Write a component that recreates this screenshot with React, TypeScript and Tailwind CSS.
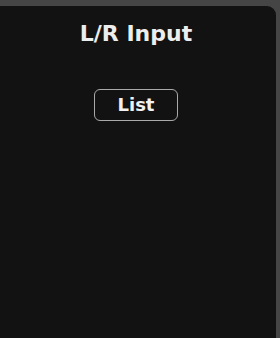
export default function App() {
  return (
    <div className="w-[280px] h-[338px] bg-[#454545] pt-[6px] pr-[4px] overflow-hidden" style={{ fontFamily: '"DejaVu Sans", "Liberation Sans", sans-serif' }}>
      <div className="h-full bg-[#121212] rounded-tr-[9px] flex flex-col items-center pr-[4px]">
        <h1 className="mt-[14px] text-[22px] leading-[28px] font-bold text-[#ededed]">L/R Input</h1>
        <button className="mt-[41px] w-[84px] h-[32px] rounded-[6px] border-[1.5px] border-[#a9a9a9] text-[18px] font-bold text-[#f2f2f2] leading-none">
          List
        </button>
      </div>
    </div>
  )
}
